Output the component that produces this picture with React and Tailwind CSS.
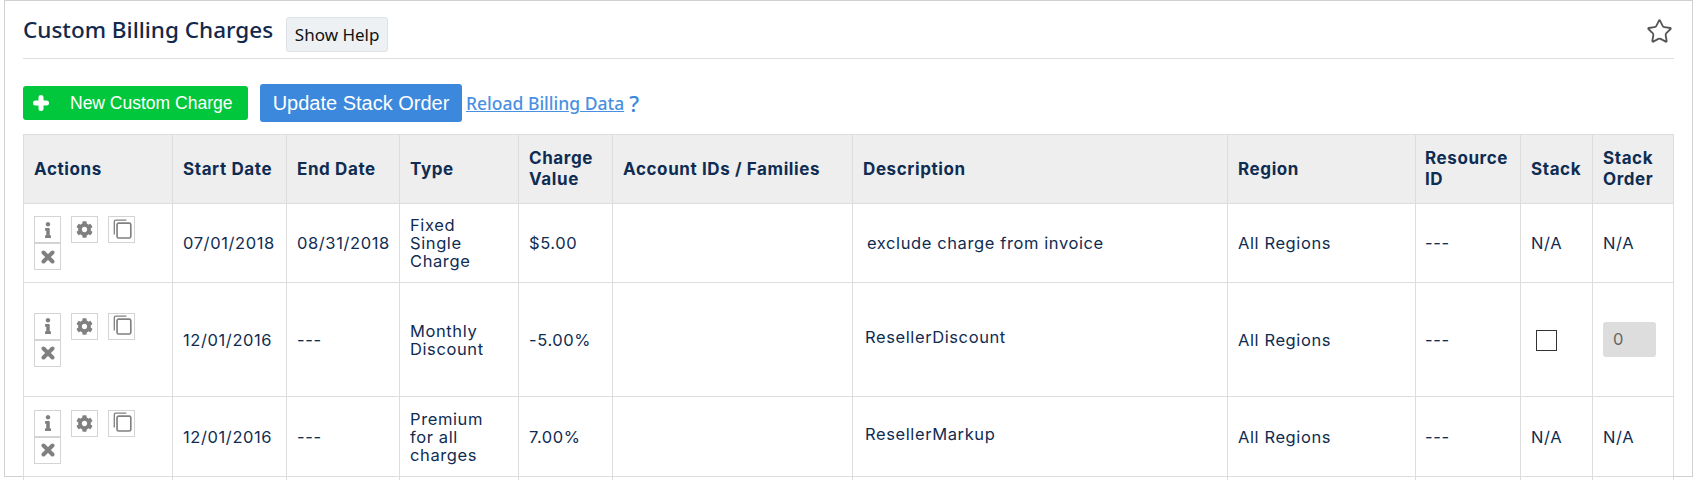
import React from "react";
import { Star } from "lucide-react";
import { FaCog, FaInfo } from "react-icons/fa";

const rows = [
  {
    start: "07/01/2018",
    end: "08/31/2018",
    type: ["Fixed", "Single", "Charge"],
    value: "$5.00",
    desc: "exclude charge from invoice",
    descPad: "pl-[14px]",
    nudge: "",
    height: "h-[79px]",
    stack: "N/A",
    order: "N/A",
  },
  {
    start: "12/01/2016",
    end: "---",
    type: ["Monthly", "Discount"],
    value: "-5.00%",
    desc: "ResellerDiscount",
    descPad: "pl-[12px] pb-[4px]",
    nudge: "pt-[2px]",
    height: "h-[114px]",
    stack: "box",
    order: "input",
  },
  {
    start: "12/01/2016",
    end: "---",
    type: ["Premium", "for all", "charges"],
    value: "7.00%",
    desc: "ResellerMarkup",
    descPad: "pl-[12px] pb-[4px]",
    nudge: "pt-[2px]",
    height: "h-[80px]",
    stack: "N/A",
    order: "N/A",
  },
];

const cols = [149, 114, 113, 119, 94, 240, 375, 188, 105, 72, 81];

const headers = [
  "Actions",
  "Start Date",
  "End Date",
  "Type",
  ["Charge", "Value"],
  "Account IDs / Families",
  "Description",
  "Region",
  ["Resource", "ID"],
  "Stack",
  ["Stack", "Order"],
];

const IconBox = ({ children, className = "" }) => (
  <span className={`inline-flex h-[27px] w-[27px] items-center justify-center border border-[#d4d4d4] text-[#808080] ${className}`}>
    {children}
  </span>
);

const CopyIcon = () => (
  <svg width="22" height="22" viewBox="0 0 20 20" fill="none" stroke="#808080" strokeWidth="1.2">
    <path d="M3 14V2.5A1.5 1.5 0 0 1 4.5 1h9.5" />
    <rect x="5.5" y="3.8" width="12.5" height="13.5" rx="1.5" strokeWidth="1.5" />
  </svg>
);

const CrossIcon = () => (
  <svg width="14" height="14" viewBox="0 0 14 14" stroke="#808080" strokeWidth="4" strokeLinecap="round">
    <path d="M2.5 2.5l9 9M11.5 2.5l-9 9" />
  </svg>
);

const PlusIcon = () => (
  <svg width="16" height="16" viewBox="0 0 16 16" stroke="#ffffff" strokeWidth="5" strokeLinecap="round">
    <path d="M8 2.5v11M2.5 8h11" />
  </svg>
);

const Actions = () => (
  <div className="flex w-[112px] flex-wrap">
    <IconBox className="mr-[10px]"><FaInfo size={16} /></IconBox>
    <IconBox className="mr-[10px]"><FaCog size={17} /></IconBox>
    <IconBox><CopyIcon /></IconBox>
    <IconBox><CrossIcon /></IconBox>
  </div>
);

const cell = "border border-[#dddddd] px-[10px] align-middle";

export default function App() {
  return (
    <div className="h-[480px] overflow-hidden bg-white font-['Inter',sans-serif] text-[#0f2c52]">
      <div className="relative ml-[4px] h-[477px] w-[1689px] border border-[#d0d0d0] pl-[18px]">
        <div className="flex h-[58px] w-[1651px] items-start border-b border-[#dddddd] pt-[16px]">
          <h1 className="font-['Noto_Sans',sans-serif] text-[22.5px] leading-[26px] font-medium text-[#12294b]">
            Custom Billing Charges
          </h1>
          <button className="ml-[13px] h-[35px] w-[102px] rounded-[3px] border border-[#dde2e6] bg-[#eef1f3] font-['Noto_Sans',sans-serif] text-[17px] text-[#111111]">
            Show Help
          </button>
          <Star className="absolute top-[17px] right-[19px] h-[27px] w-[27px] text-[#555555]" strokeWidth={1.6} />
        </div>

        <div className="mt-[25px] flex h-[38px] items-center">
          <button className="flex h-[34px] w-[225px] items-center rounded-[3px] bg-[#00c73c] pl-[10px] font-['Liberation_Sans',sans-serif] text-[17.5px] text-white">
            <PlusIcon />
            <span className="ml-[21px]">New Custom Charge</span>
          </button>
          <button className="ml-[12px] h-[38px] w-[202px] rounded-[3px] bg-[#3b88dd] font-['Liberation_Sans',sans-serif] text-[20px] text-white">
            Update Stack Order
          </button>
          <a href="#" className="ml-[4px] font-['Noto_Sans',sans-serif] text-[17.5px] font-medium text-[#4a90e2] underline">
            Reload Billing Data
          </a>
          <span className="ml-[5px] font-['Noto_Sans',sans-serif] text-[22px] font-medium text-[#3b88dd]">?</span>
        </div>

        <table className="mt-[12px] w-[1651px] table-fixed border-collapse text-[16.5px] tracking-[0.6px]">
          <colgroup>
            {cols.map((w, i) => (
              <col key={i} style={{ width: w }} />
            ))}
          </colgroup>
          <thead>
            <tr className="h-[69px] bg-[#eeeeee]">
              {headers.map((h, i) => (
                <th key={i} className={`${cell} ${i === 8 ? "pl-[9px]" : ""} text-left text-[17px] leading-[21px] font-bold tracking-[0.6px] text-[#0f2c52]`}>
                  {Array.isArray(h) ? h.map((line) => <div key={line}>{line}</div>) : h}
                </th>
              ))}
            </tr>
          </thead>
          <tbody>
            {rows.map((row, i) => (
              <tr key={i} className={row.height}>
                <td className={cell}><Actions /></td>
                <td className={`${cell} ${row.nudge}`}>{row.start}</td>
                <td className={`${cell} ${row.nudge} px-[6px]`}>{row.end}</td>
                <td className={`${cell} leading-[18px]`}>
                  {row.type.map((line) => <div key={line}>{line}</div>)}
                </td>
                <td className={`${cell} ${row.nudge}`}>{row.value}</td>
                <td className={cell}></td>
                <td className={`${cell} ${row.descPad}`}>{row.desc}</td>
                <td className={`${cell} ${row.nudge}`}>All Regions</td>
                <td className={`${cell} ${row.nudge} pl-[9px]`}>---</td>
                <td className={`${cell} ${row.nudge}`}>
                  {row.stack === "box" ? (
                    <span className="ml-[5px] block h-[21px] w-[21px] border border-[#333333]"></span>
                  ) : (
                    row.stack
                  )}
                </td>
                <td className={cell}>
                  {row.order === "input" ? (
                    <div className="flex h-[35px] w-[53px] items-center rounded-[3px] bg-[#dddddd] pl-[10px] text-[#666666]">0</div>
                  ) : (
                    <div className={row.nudge}>{row.order}</div>
                  )}
                </td>
              </tr>
            ))}
            <tr className="h-[40px]">
              {cols.map((w, i) => (
                <td key={i} className={cell}></td>
              ))}
            </tr>
          </tbody>
        </table>
      </div>
    </div>
  );
}
